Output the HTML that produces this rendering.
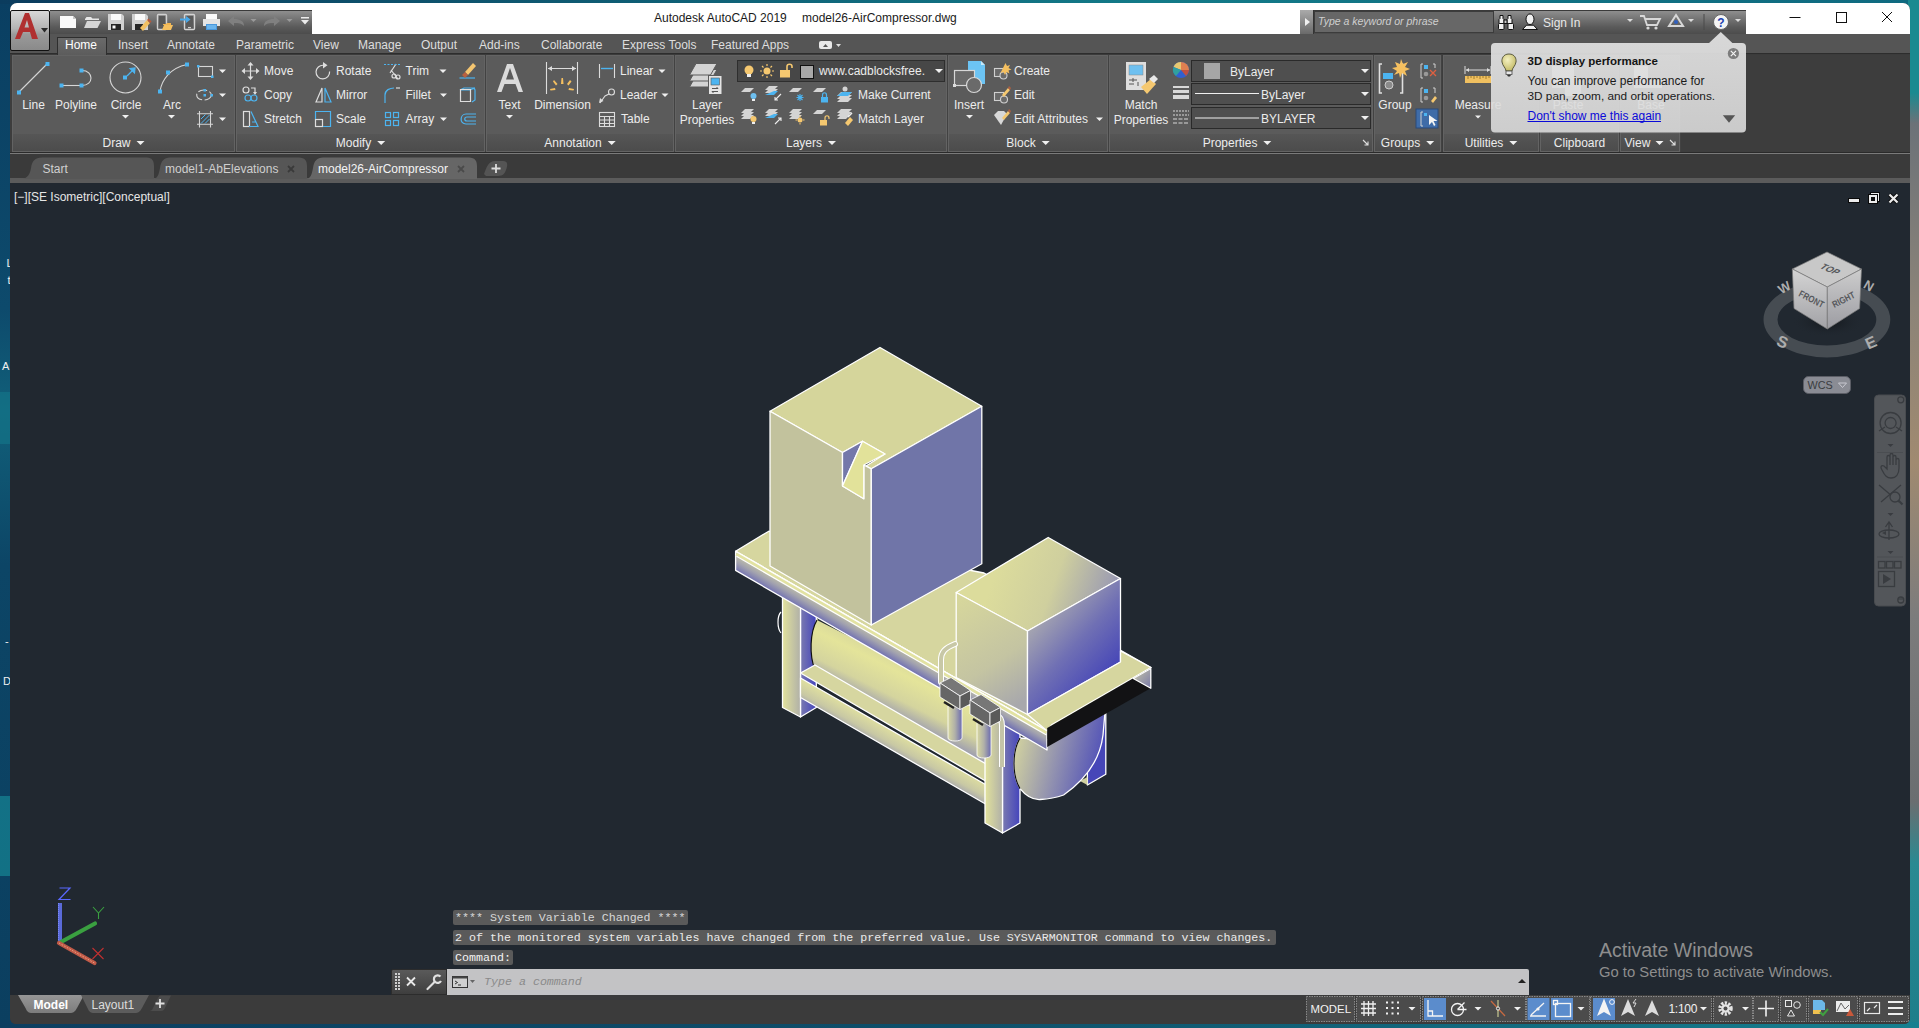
<!DOCTYPE html>
<html><head><meta charset="utf-8">
<style>
*{margin:0;padding:0;box-sizing:border-box}
html,body{width:1919px;height:1028px;overflow:hidden}
body{position:relative;font-family:"Liberation Sans",sans-serif;font-size:12px;
background:linear-gradient(180deg,#0a3f62 0,#0d4a6c 30%,#11607a 40%,#0c4566 55%,#0b3f60 100%);}
.a{position:absolute}
.t{position:absolute;white-space:nowrap;color:#f0f0f0;font-size:12px;line-height:14px}
.m{position:absolute;white-space:nowrap;font-family:"Liberation Mono",monospace;font-size:11.65px;line-height:15px}
#deskR{left:1908px;top:0;width:11px;height:1028px;background:linear-gradient(180deg,#1a8a90 0,#1a8a90 9%,#6c7278 12%,#8c8478 30%,#a08a70 45%,#7c7c7c 60%,#6a6e70 78%,#2a8a92 84%,#1d7e8a 100%)}
#deskT{left:0;top:0;width:1919px;height:4px;background:linear-gradient(90deg,#0b3c5e 0,#0e5a72 30%,#127a88 60%,#0f6a80 100%)}
#deskB{left:0;top:1022px;width:1919px;height:6px;background:linear-gradient(90deg,#0c3e60 0,#0e4f6a 50%,#168090 100%)}
#win{left:10px;top:3px;width:1900px;height:1021px;border-radius:7px 7px 6px 6px;overflow:hidden;background:#3b3b3b}
#title{left:0;top:0;width:1900px;height:31px;background:#fff}
#tabbar{left:0;top:31px;width:1900px;height:20px;background:#555555;border-bottom:1px solid #2d2d2d}
#ribbon{left:0;top:52px;width:1900px;height:97px;background:#3d3d3d}
#doctabs{left:0;top:149px;width:1900px;height:31px;background:#3a3a3a}
#vp{left:0;top:180px;width:1900px;height:812px;background:#212830}
#status{left:0;top:992px;width:1900px;height:29px;background:#3b3b3b}
</style></head><body>
<div id="deskT" class="a"></div>
<div id="deskR" class="a"></div>
<div id="deskB" class="a"></div>
<svg class="a" style="left:0;top:0" width="12" height="1028" viewBox="0 0 12 1028">
 <rect x="0" y="392" width="12" height="52" fill="#147a8c" opacity=".55"/>
 <rect x="0" y="796" width="12" height="80" fill="#168292" opacity=".75"/>
 <g font-family="Liberation Sans" font-size="11" fill="#f0f0f0">
  <text x="6.5" y="266.5">L</text><text x="7.5" y="284">t</text><text x="2" y="370">A</text><text x="5" y="645">-</text><text x="3" y="685">D</text>
 </g>
</svg>
<div id="win" class="a">
  <div id="title" class="a"></div>
  <div id="tabbar" class="a"></div>
  <div id="ribbon" class="a"></div>
  <div id="doctabs" class="a"></div>
  <div id="vp" class="a"></div>
  <div id="status" class="a"></div>
</div>
<!-- ===== TITLE BAR ===== -->
<div class="a" style="left:10px;top:10px;width:40px;height:41px;border:1px solid #111;border-radius:2px;background:linear-gradient(180deg,#d8d8d8 0,#b4b4b4 45%,#9a9a9a 60%,#8a8a8a 100%)"></div>
<svg class="a" style="left:10px;top:10px" width="40" height="41" viewBox="0 0 40 41">
 <path d="M5 29 L15 3 L19 3 L28 29 L22 29 L20 22 L13 22 L10 29 Z M14.5 17.5 L19 17.5 L17 10 Z" fill="#b03030"/>
 <path d="M31 18 L38 18 L34.5 22.5 Z" fill="#2a2a2a"/>
</svg>
<div class="a" style="left:50px;top:10px;width:262px;height:24px;border-top:1px solid #3a3a3a;background:linear-gradient(180deg,#8e8e8e 0,#6c6c6c 45%,#5a5a5a 70%,#4c4c4c 100%)"></div>
<svg class="a" style="left:50px;top:10px" width="262" height="24" viewBox="50 10 262 24">
 <path d="M60 16 H73 L76 19 V28 H60 Z" fill="#fafafa"/><path d="M73 16 V19 H76 Z" fill="#c8c8c8"/>
 <path d="M85 19 L86.5 17 H91 L92.5 18.5 H99 V20 H85 Z" fill="#e8e8e8"/><path d="M84 28 L87 21 H101 L97.5 28 Z" fill="#d6d6d6"/>
 <path d="M108 14 H122 L124 16 V30 H108 Z" fill="#d0d0d0"/><rect x="111" y="14" width="10" height="6" fill="#fafafa"/><rect x="111" y="24" width="10" height="6" fill="#252525"/><rect x="112.5" y="25.5" width="3" height="3" fill="#fafafa"/>
 <path d="M132 14 H146 L148 16 V30 H132 Z" fill="#d0d0d0"/><rect x="135" y="14" width="10" height="6" fill="#fafafa"/><rect x="135" y="24" width="8" height="6" fill="#252525"/>
 <path d="M140 28 L147 20 L150 23 L143 31 Z" fill="#f2c062"/><path d="M147 20 L148.5 18.5 L151.5 21.5 L150 23 Z" fill="#b8583a"/>
 <rect x="157.5" y="14.5" width="9" height="15" rx="1" fill="none" stroke="#d0d0d0" stroke-width="1.4"/><rect x="159" y="16" width="6" height="10" fill="#575757"/>
 <path d="M163 24 H166 L167 23 H171 V25 H163 Z" fill="#f0b450"/><path d="M162 30 L164 25 H173 L171 30 Z" fill="#f5c060"/>
 <rect x="184.5" y="14.5" width="10" height="15" rx="1" fill="none" stroke="#d4d4d4" stroke-width="1.4"/><rect x="186" y="16" width="7" height="10" fill="#5a5a5a"/><rect x="188" y="27" width="3" height="1.2" fill="#ccc"/>
 <path d="M180 18.5 H186 V16 L190.5 19.5 L186 23 V20.5 H180 Z" fill="#4aa8e8"/>
 <rect x="206" y="14" width="11" height="5" fill="#fafafa"/><path d="M203 19 H220 V26 H217 V24 H206 V26 H203 Z" fill="#e4e4e4"/><rect x="206" y="24" width="11" height="6" fill="#4a98dc"/><rect x="207" y="25" width="9" height="4" fill="#6ab4ec"/>
 <path d="M228 21 L234 16 V19 C240 19 244 21 244 26 C242 23.5 239 23 234 23 V26 Z" fill="#808080"/>
 <path d="M250.5 19 H256.5 L253.5 22 Z" fill="#9a9a9a"/>
 <path d="M280 21 L274 16 V19 C268 19 264 21 264 26 C266 23.5 269 23 274 23 V26 Z" fill="#808080"/>
 <path d="M286.5 19 H292.5 L289.5 22 Z" fill="#9a9a9a"/>
 <path d="M301 17 H309 V18.5 H301 Z M301 20 H309 L305 24.5 Z" fill="#ececec"/>
</svg>
<div class="t" style="left:654px;top:11px;color:#1a1a1a;font-size:12px">Autodesk AutoCAD 2019</div>
<div class="t" style="left:802px;top:11px;color:#1a1a1a;font-size:12px">model26-AirCompressor.dwg</div>
<!-- search -->
<div class="a" style="left:1300px;top:10px;width:446px;height:24px;border-top:1px solid #3a3a3a;background:linear-gradient(180deg,#8e8e8e 0,#6c6c6c 45%,#5a5a5a 70%,#4c4c4c 100%)"></div>
<div class="a" style="left:1300px;top:10px;width:14px;height:24px;border-right:1px solid #333;background:linear-gradient(180deg,#aaa,#6a6a6a)"></div>
<svg class="a" style="left:1302px;top:16px" width="10" height="12"><path d="M3 2 L8 6 L3 10 Z" fill="#f0f0f0"/></svg>
<div class="a" style="left:1314px;top:11px;width:180px;height:22px;background:#676767;border:1px solid #3c3c3c"></div>
<div class="t" style="left:1318px;top:14px;color:#cfcfcf;font-style:italic;font-size:10.5px">Type a keyword or phrase</div>
<svg class="a" style="left:1494px;top:10px" width="252" height="24" viewBox="0 0 252 24">
 <g stroke="#111" stroke-width="1" fill="#f0f0f0">
  <path d="M6 5.5 h3 v3 l1 1 v4 h-5 v-4 l1 -1z"/><path d="M14 5.5 h3 v3 l1 1 v4 h-5 v-4 l1 -1z"/>
  <rect x="4.5" y="13.5" width="5.5" height="6" rx="1"/><rect x="14" y="13.5" width="5.5" height="6" rx="1"/>
  <rect x="10" y="10" width="3" height="3.5" fill="#ccc"/>
  <ellipse cx="36" cy="9.2" rx="4" ry="5.3"/><path d="M28.5 19.5 L32.5 15.2 H39.5 L43.5 19.5 Z"/>
 </g>
 <text x="49" y="17" font-family="Liberation Sans" font-size="12" fill="#e8e8e8">Sign In</text>
 <path d="M133 9 H139 L136 12 Z" fill="#ddd"/>
 <path d="M146 6 H150 L153 15 H163 L166 9 H151" fill="none" stroke="#d8d8d8" stroke-width="1.8"/><circle cx="154" cy="18" r="1.6" fill="#d8d8d8"/><circle cx="162" cy="18" r="1.6" fill="#d8d8d8"/>
 <path d="M182 5 L189 16 H175 Z" fill="none" stroke="#d8d8d8" stroke-width="2"/><circle cx="182" cy="12" r="2" fill="#3060c0"/>
 <path d="M194 9 H200 L197 12 Z" fill="#ddd"/>
 <path d="M210 4 V20" stroke="#4a4a4a"/>
 <circle cx="227" cy="12" r="7.5" fill="#f4f4f4" stroke="#666" stroke-width="1"/><text x="227" y="16.5" text-anchor="middle" font-family="Liberation Sans" font-weight="bold" font-size="12" fill="#2040b0">?</text>
 <path d="M241 9 H247 L244 12 Z" fill="#ddd"/>
</svg>
<!-- window controls -->
<svg class="a" style="left:1780px;top:8px" width="125" height="20" viewBox="0 0 125 20">
 <path d="M9.5 9.5 H20.5" stroke="#111" stroke-width="1"/>
 <rect x="56.5" y="4.5" width="10" height="10" fill="none" stroke="#111" stroke-width="1"/>
 <path d="M102 4 L112 14 M112 4 L102 14" stroke="#111" stroke-width="1"/>
</svg>
<!-- ===== TAB BAR ===== -->
<div class="a" style="left:57px;top:37px;width:50px;height:18px;border:1px solid #2e2e2e;border-bottom:none;background:linear-gradient(180deg,#6a6a6a,#5c5c5c)"></div>
<div class="t" style="left:65px;top:38px;color:#fff">Home</div>
<div class="t" style="left:118px;top:38px;color:#dedede">Insert</div>
<div class="t" style="left:167px;top:38px;color:#dedede">Annotate</div>
<div class="t" style="left:236px;top:38px;color:#dedede">Parametric</div>
<div class="t" style="left:313px;top:38px;color:#dedede">View</div>
<div class="t" style="left:358px;top:38px;color:#dedede">Manage</div>
<div class="t" style="left:421px;top:38px;color:#dedede">Output</div>
<div class="t" style="left:479px;top:38px;color:#dedede">Add-ins</div>
<div class="t" style="left:541px;top:38px;color:#dedede">Collaborate</div>
<div class="t" style="left:622px;top:38px;color:#dedede">Express Tools</div>
<div class="t" style="left:711px;top:38px;color:#dedede">Featured Apps</div>
<svg class="a" style="left:818px;top:39px" width="26" height="12"><rect x="1" y="2" width="13" height="8" rx="2" fill="#e8e8e8"/><path d="M5 8 L7.5 5 L10 8Z" fill="#555"/><path d="M18 5 H23 L20.5 8Z" fill="#ddd"/></svg>


<div class="a" style="left:10px;top:152px;width:1900px;height:1px;background:#2a2a2a"></div>
<div class="a" style="left:10px;top:153px;width:1900px;height:1px;background:#7a7a7a"></div>
<svg class="a" style="left:0;top:0" width="1919" height="160" viewBox="0 0 1919 160">
<defs><linearGradient id="lbl" x1="0" y1="0" x2="0" y2="1"><stop offset="0" stop-color="#565656"/><stop offset="1" stop-color="#4b4b4b"/></linearGradient></defs>
<rect x="12" y="55" width="223" height="79" fill="#5b5b5b"/>
<rect x="12" y="134" width="223" height="18" fill="url(#lbl)"/>
<rect x="12.5" y="55.5" width="222" height="96" fill="none" stroke="#636363" stroke-width="1"/>
<rect x="235" y="55" width="1" height="97" fill="#424242"/>
<text x="102.5" y="147" font-family="Liberation Sans" font-size="12" fill="#ececec">Draw</text>
<path d="M136.5 141 h8 l-4 4 z" fill="#f0f0f0"/>
<rect x="236" y="55" width="249" height="79" fill="#5b5b5b"/>
<rect x="236" y="134" width="249" height="18" fill="url(#lbl)"/>
<rect x="236.5" y="55.5" width="248" height="96" fill="none" stroke="#636363" stroke-width="1"/>
<rect x="485" y="55" width="1" height="97" fill="#424242"/>
<text x="335.8" y="147" font-family="Liberation Sans" font-size="12" fill="#ececec">Modify</text>
<path d="M377.2 141 h8 l-4 4 z" fill="#f0f0f0"/>
<rect x="486" y="55" width="188" height="79" fill="#5b5b5b"/>
<rect x="486" y="134" width="188" height="18" fill="url(#lbl)"/>
<rect x="486.5" y="55.5" width="187" height="96" fill="none" stroke="#636363" stroke-width="1"/>
<rect x="674" y="55" width="1" height="97" fill="#424242"/>
<text x="544.3" y="147" font-family="Liberation Sans" font-size="12" fill="#ececec">Annotation</text>
<path d="M607.7 141 h8 l-4 4 z" fill="#f0f0f0"/>
<rect x="675" y="55" width="272" height="79" fill="#5b5b5b"/>
<rect x="675" y="134" width="272" height="18" fill="url(#lbl)"/>
<rect x="675.5" y="55.5" width="271" height="96" fill="none" stroke="#636363" stroke-width="1"/>
<rect x="947" y="55" width="1" height="97" fill="#424242"/>
<text x="786.0" y="147" font-family="Liberation Sans" font-size="12" fill="#ececec">Layers</text>
<path d="M828.0 141 h8 l-4 4 z" fill="#f0f0f0"/>
<rect x="948" y="55" width="160" height="79" fill="#5b5b5b"/>
<rect x="948" y="134" width="160" height="18" fill="url(#lbl)"/>
<rect x="948.5" y="55.5" width="159" height="96" fill="none" stroke="#636363" stroke-width="1"/>
<rect x="1108" y="55" width="1" height="97" fill="#424242"/>
<text x="1006.3" y="147" font-family="Liberation Sans" font-size="12" fill="#ececec">Block</text>
<path d="M1041.7 141 h8 l-4 4 z" fill="#f0f0f0"/>
<rect x="1109" y="55" width="264" height="79" fill="#5b5b5b"/>
<rect x="1109" y="134" width="264" height="18" fill="url(#lbl)"/>
<rect x="1109.5" y="55.5" width="263" height="96" fill="none" stroke="#636363" stroke-width="1"/>
<rect x="1373" y="55" width="1" height="97" fill="#424242"/>
<text x="1202.7" y="147" font-family="Liberation Sans" font-size="12" fill="#ececec">Properties</text>
<path d="M1263.3 141 h8 l-4 4 z" fill="#f0f0f0"/>
<path d="M1363 140 l5 5 M1368 141.5 v3.5 h-3.5" stroke="#e0e0e0" stroke-width="1.1" fill="none"/>
<rect x="1374" y="55" width="67" height="79" fill="#5b5b5b"/>
<rect x="1374" y="134" width="67" height="18" fill="url(#lbl)"/>
<rect x="1374.5" y="55.5" width="66" height="96" fill="none" stroke="#636363" stroke-width="1"/>
<rect x="1441" y="55" width="1" height="97" fill="#424242"/>
<text x="1380.8" y="147" font-family="Liberation Sans" font-size="12" fill="#ececec">Groups</text>
<path d="M1426.2 141 h8 l-4 4 z" fill="#f0f0f0"/>
<rect x="1443" y="55" width="96" height="79" fill="#5b5b5b"/>
<rect x="1443" y="134" width="96" height="18" fill="url(#lbl)"/>
<rect x="1443.5" y="55.5" width="95" height="96" fill="none" stroke="#636363" stroke-width="1"/>
<rect x="1539" y="55" width="1" height="97" fill="#424242"/>
<text x="1464.7" y="147" font-family="Liberation Sans" font-size="12" fill="#ececec">Utilities</text>
<path d="M1509.3 141 h8 l-4 4 z" fill="#f0f0f0"/>
<rect x="1540" y="55" width="79" height="79" fill="#5b5b5b"/>
<rect x="1540" y="134" width="79" height="18" fill="url(#lbl)"/>
<rect x="1540.5" y="55.5" width="78" height="96" fill="none" stroke="#636363" stroke-width="1"/>
<rect x="1619" y="55" width="1" height="97" fill="#424242"/>
<text x="1553.8" y="147" font-family="Liberation Sans" font-size="12" fill="#ececec">Clipboard</text>
<rect x="1620" y="55" width="60" height="79" fill="#5b5b5b"/>
<rect x="1620" y="134" width="60" height="18" fill="url(#lbl)"/>
<rect x="1620.5" y="55.5" width="59" height="96" fill="none" stroke="#636363" stroke-width="1"/>
<rect x="1680" y="55" width="1" height="97" fill="#424242"/>
<text x="1624.5" y="147" font-family="Liberation Sans" font-size="12" fill="#ececec">View</text>
<path d="M1655.5 141 h8 l-4 4 z" fill="#f0f0f0"/>
<path d="M1670 140 l5 5 M1675 141.5 v3.5 h-3.5" stroke="#e0e0e0" stroke-width="1.1" fill="none"/>
<rect x="1681" y="55" width="229" height="97" fill="#3d3d3d"/>
<g font-family="Liberation Sans" font-size="12" fill="#ececec">
<!-- DRAW -->
<g stroke="#d6d6d6" stroke-width="1.1" fill="none">
 <path d="M19 92 L47 64"/>
 <path d="M62 85.5 H81"/><path d="M82 70.5 C94 70.5 94 85.5 82 85.5"/>
 <circle cx="125.5" cy="77.5" r="15.5"/>
 <path d="M160 91 C162 80 170 68 187 64.5"/>
 <rect x="198.5" y="66.5" width="14" height="10"/>
 <ellipse cx="204" cy="95" rx="7.3" ry="5" stroke-dasharray="9 2.5"/>
 <rect x="200" y="114" width="10.5" height="10.3" fill="#4c4c4c" stroke="none"/><path d="M197 113.8h16M197 124.2h16M199.5 111v16.5M210.5 111v16.5"/>
</g>
<g fill="#4cb4f0">
 <rect x="17" y="90.5" width="4" height="4"/><rect x="45.5" y="62" width="4" height="4"/>
 <rect x="59.5" y="83.5" width="4" height="4"/><rect x="79.5" y="83.5" width="4" height="4"/><rect x="79.5" y="68.5" width="4" height="4"/>
 <rect x="123" y="75.5" width="4" height="4"/><path d="M127 76 L133 70 M130 68.5 L135 68 L134.5 73 Z" stroke="#4cb4f0" stroke-width="1.2"/>
 <rect x="158" y="89.5" width="4" height="4"/><rect x="166" y="70.5" width="4" height="4"/><rect x="185" y="62.5" width="4" height="4"/>
 <rect x="197" y="65" width="2.5" height="2.5"/><rect x="211" y="75.5" width="2.5" height="2.5"/>
 <rect x="203.5" y="89" width="2.5" height="2.5"/><rect x="203.5" y="94" width="2.5" height="2.5"/><rect x="210.5" y="94" width="2.5" height="2.5"/>
 <path d="M201 123.5 L209.5 115 M201 119 L205.5 114.5 M205 123.5 L209.5 119" stroke="#4cb4f0" stroke-width="1"/>
</g>
<text x="33.5" y="109" text-anchor="middle">Line</text>
<text x="76" y="109" text-anchor="middle">Polyline</text>
<text x="126" y="109" text-anchor="middle">Circle</text>
<text x="172" y="109" text-anchor="middle">Arc</text>
<g fill="#f0f0f0">
 <path d="M122 115 h7 l-3.5 3.5z"/><path d="M168 115 h7 l-3.5 3.5z"/>
 <path d="M219 69.5 h7 l-3.5 3.5z"/><path d="M219 93.5 h7 l-3.5 3.5z"/><path d="M219 117.5 h7 l-3.5 3.5z"/>
</g>
<!-- MODIFY -->
<text x="264" y="75">Move</text><text x="264" y="99">Copy</text><text x="264" y="123">Stretch</text>
<text x="336" y="75">Rotate</text><text x="336" y="99">Mirror</text><text x="336" y="123">Scale</text>
<text x="405.5" y="75">Trim</text><text x="405.5" y="99">Fillet</text><text x="405.5" y="123">Array</text>
<g fill="#f0f0f0"><path d="M439.5 69.5 h7 l-3.5 3.5z"/><path d="M440 93.5 h7 l-3.5 3.5z"/><path d="M440 117.5 h7 l-3.5 3.5z"/></g>
<g stroke="#dedede" stroke-width="1.2" fill="none">
 <path d="M250.5 63.5 V78.5 M243 71 H258"/>
 <path d="M329.6 71.5 A 6.8 6.8 0 1 1 323.5 65.3"/>
 <path d="M391 70 L398 79 M396 64 L390 73"/><circle cx="394" cy="76" r="2"/><circle cx="398" cy="77" r="2"/>
 <circle cx="246" cy="90" r="3"/><path d="M251 88 H255 V92"/>
 <path d="M316 102 L322 88 V102 Z"/>
 <rect x="243.5" y="111.5" width="6" height="15"/>
 <rect x="315.5" y="119.5" width="7" height="7"/>
</g>
<g fill="#dedede">
 <path d="M250.5 62 L247.5 65.5 H253.5 Z M250.5 80 L247.5 76.5 H253.5 Z M241.5 71 L245 68 V74 Z M259.5 71 L256 68 V74 Z"/>
 <path d="M323 62 L327.5 65.3 L323 68.6 Z"/>
 <path d="M253 92 L257 92 L255 95 Z"/>
</g>
<g stroke="#4cb4f0" stroke-width="1.2" fill="none">
 <path d="M384 64.5 H400" stroke-dasharray="2 1.5"/>
 <circle cx="248" cy="98" r="3"/><circle cx="254" cy="98" r="3"/>
 <path d="M325 88 V102 H331 Z"/>
 <path d="M385 103 V95 C385 90 390 88 394 88"/><path d="M396 88 H400" stroke="#dedede"/>
 <path d="M251 111.5 L258 126.5 H249 M252 122 L256 122"/>
 <path d="M315.5 119 V111.5 H330.5 V126.5 H323"/>
 <rect x="385.5" y="112.5" width="5" height="5"/><rect x="393.5" y="112.5" width="5" height="5"/><rect x="385.5" y="120.5" width="5" height="5"/><rect x="393.5" y="120.5" width="5" height="5"/>
 <path d="M459.5 78 H475"/>
 <path d="M460 90 L464 88 H474 L475 90 V100 L472 102 M460 90 H470 L475 88"/>
 <path d="M476 114 H466 C460 114 459 124 466 124 H476 M476 117 H467 C464 117 464 121 467 121 H476"/>
</g>
<g>
 <path d="M465 72 L473 63 L476 66 L468 75 Z" fill="#f4c570"/><path d="M462 75 L465 72 L468 75 L465 78 Z" fill="#b86040"/>
 <path d="M460.5 89.5 h10 v12 h-10z" fill="none" stroke="#dedede" stroke-width="1.2"/>
</g>
<!-- ANNOTATION -->
<path d="M497 92 L507 64 H513 L523 92 H518.5 L515.5 84 H504.5 L501.5 92 Z M506 79.5 H514 L510 68 Z" fill="#dadada"/>
<text x="509.5" y="109" text-anchor="middle">Text</text><path d="M506 115 h7 l-3.5 3.5z" fill="#f0f0f0"/>
<g stroke="#dcdcdc" stroke-width="1.1" fill="none"><path d="M546.5 62 V94 M577.5 62 V94 M548 68.5 H576"/></g>
<g fill="#dcdcdc"><path d="M548 68.5 L552 66 V71 Z M576 68.5 L572 66 V71 Z"/></g>
<g fill="#f5c060"><path d="M561.5 78 L563 78 L563.5 84 L561 84Z"/><path d="M554 80 L557.5 84 L556 85.5 L553 81.5Z"/><path d="M570 80 L567 84 L568.5 85.5 L571.5 81.5Z"/><path d="M550 89 L555 88 L555.5 90 L550.5 90.5Z"/><path d="M574 89 L569 88 L568.5 90 L573.5 90.5Z"/></g>
<text x="562.5" y="109" text-anchor="middle">Dimension</text>
<g stroke="#dcdcdc" stroke-width="1.1" fill="none"><path d="M599.5 64 V78 M614.5 64 V78"/><circle cx="611.5" cy="92" r="3"/><path d="M609 94 L605 96 L600 103"/><rect x="599.5" y="112.5" width="15" height="14"/><path d="M599.5 116.5 H614.5 M599.5 120 H614.5 M599.5 123.5 H614.5 M604.5 116.5 V126.5 M609.5 116.5 V126.5"/></g>
<path d="M601 68.5 H613" stroke="#4cb4f0" stroke-width="1.4"/>
<path d="M599 103 L600 98 L603.5 101 Z" fill="#dcdcdc"/>
<text x="620" y="75">Linear</text><text x="620" y="99">Leader</text><text x="621" y="123">Table</text>
<g fill="#f0f0f0"><path d="M658.5 69.5 h7 l-3.5 3.5z"/><path d="M661.5 93.5 h7 l-3.5 3.5z"/></g>
<!-- LAYERS -->
<g fill="#d4d4d4" stroke="#5b5b5b" stroke-width="1"><path d="M689.5 87 L696 75.5 H717 L710.5 87 Z"/><path d="M689.5 81 L696 69.5 H717 L710.5 81 Z"/><path d="M689.5 75 L696 63.5 H717 L710.5 75 Z"/></g>
<rect x="708.5" y="75.5" width="13.5" height="19" fill="#e4e4e4" stroke="#5b5b5b"/><rect x="711" y="78" width="8.5" height="7" fill="#4cb4f0" stroke="#555" stroke-width=".6"/><path d="M712 88.5 h6 l-1.5 -1.5 M718 91.5 h-6 l1.5 1.5" stroke="#555" stroke-width="1" fill="none"/>
<text x="707" y="109" text-anchor="middle">Layer</text><text x="707" y="124" text-anchor="middle">Properties</text>
<rect x="737.5" y="60.5" width="207" height="21" fill="#474747" stroke="#2e2e2e"/>
<circle cx="749" cy="70" r="4.5" fill="#f5c870"/><rect x="747" y="74" width="4" height="3" fill="#eee"/>
<circle cx="767" cy="71" r="3.5" fill="#f5c870"/><g stroke="#f5c870" stroke-width="1.2"><path d="M767 64 v2 M767 76 v2 M760 71 h2 M772 71 h2 M762 66 l1.5 1.5 M770.5 74.5 l1.5 1.5 M762 76 l1.5 -1.5 M770.5 67.5 l1.5 -1.5"/></g>
<rect x="780" y="70" width="10" height="7.5" fill="#f5c870"/><path d="M787 70 V66.5 C787 63.5 792 63.5 792 66.5 V68" stroke="#f5c870" stroke-width="1.6" fill="none"/>
<rect x="800.5" y="65.5" width="13" height="13" fill="#a8a8a8" stroke="#111"/>
<text x="819" y="75">www.cadblocksfree.</text><path d="M935 69 h8 l-4 4z" fill="#f0f0f0"/>
<g fill="#d4d4d4">
 <path d="M741 92 L745 88 H754 L750 92Z"/><path d="M765 90 L769 86 H778 L774 90Z"/><path d="M765 93 L769 89 H778 L774 93Z"/><path d="M789 92 L793 88 H802 L798 92Z"/><path d="M813 92 L817 88 H826 L822 92Z"/>
 <path d="M837 96 L841 92 H852 L848 96Z"/><path d="M837 99 L841 95 H852 L848 99Z"/><path d="M837 102 L841 98 H852 L848 102Z"/>
 <path d="M741 113 L745 109 H754 L750 113Z"/><path d="M741 116 L745 112 H754 L750 116Z"/><path d="M741 119 L745 115 H754 L750 119Z"/>
 <path d="M765 113 L769 109 H778 L774 113Z"/><path d="M765 116 L769 112 H778 L774 116Z"/>
 <path d="M789 113 L793 109 H802 L798 113Z"/><path d="M789 116 L793 112 H802 L798 116Z"/><path d="M789 119 L793 115 H802 L798 119Z"/>
 <path d="M813 114 L817 110 H826 L822 114Z"/>
 <path d="M837 113 L841 109 H852 L848 113Z"/><path d="M837 116 L841 112 H852 L848 116Z"/><path d="M837 119 L841 115 H850 L846 119Z"/>
</g>
<circle cx="753.5" cy="96" r="3" fill="#6ec0f0"/><rect x="752" y="99" width="3" height="2" fill="#eee"/>
<path d="M765 95 L774 91 H778 L774 95Z" fill="#4cb4f0"/><path d="M781 94 L775 100 M775 97 V100 H778" stroke="#eee" stroke-width="1.1" fill="none"/>
<g stroke="#4cb4f0" stroke-width="1.1"><path d="M800 94 v7 M796.5 97.5 h7 M797.5 95 l5 5 M802.5 95 l-5 5"/></g>
<rect x="821" y="97" width="7" height="5.5" fill="#4cb4f0"/><path d="M822.5 97 v-2 c0-3 4-3 4 0 v2" stroke="#4cb4f0" fill="none" stroke-width="1.2"/>
<path d="M837 96 L842 92 H852 L848 96Z" fill="#4cb4f0"/><circle cx="845" cy="89" r="2.5" fill="#d4d4d4"/>
<circle cx="753.5" cy="119" r="3" fill="#f5c870"/><rect x="752" y="122" width="3" height="2" fill="#eee"/>
<path d="M765 118 L774 114 H778 L774 118Z" fill="#4cb4f0"/><path d="M775 124 L781 118 M778 118 H781 V121" stroke="#eee" stroke-width="1.1" fill="none"/>
<circle cx="800" cy="120" r="2.5" fill="#f5c870"/><g stroke="#f5c870" stroke-width="1"><path d="M800 115.5 v1.5 M800 123 v1.5 M795.5 120 h1.5 M803 120 h1.5"/></g>
<rect x="820" y="120" width="7" height="5.5" fill="#f5c870"/><path d="M825 120 v-2 c0-3 4-3 4 0 v1" stroke="#f5c870" fill="none" stroke-width="1.2"/>
<path d="M845 123 L850 117 L853 120 L848 126Z" fill="#f5c870"/><path d="M848 117 L852 113" stroke="#eee" stroke-width="1.5"/>
<text x="858" y="99">Make Current</text><text x="858" y="123">Match Layer</text>
<!-- BLOCK -->
<path d="M968 61 H981 L985 65 V84 H968Z" fill="#6cc4f4"/><path d="M981 61 V65 H985Z" fill="#c8e8f8"/>
<rect x="954.5" y="70.5" width="20" height="15" fill="#6a6a6a" stroke="#d8d8d8" stroke-width="1.2"/><circle cx="974" cy="85" r="7.5" fill="#6a6a6a" stroke="#d8d8d8" stroke-width="1.2"/><rect x="953" y="84" width="3" height="3" fill="#ddd"/>
<text x="969" y="109" text-anchor="middle">Insert</text><path d="M966 115 h7 l-3.5 3.5z" fill="#f0f0f0"/>
<g stroke="#d0d0d0" stroke-width="1.1" fill="#6a6a6a"><rect x="994.5" y="68.5" width="9" height="8"/><circle cx="1003.5" cy="75.5" r="3.5"/><rect x="994.5" y="92.5" width="9" height="8"/><circle cx="1004" cy="99.5" r="3.5"/></g>
<path d="M1004 66 l1.5 -3 l1.5 3 l3 -1 l-1.5 3 l3 1.5 l-3 1 l1 3 l-3-1.5 l-1.5 3 l-1.5-3 l-3 1 l1.5-3 z" fill="#f5c060"/>
<path d="M1002 95 L1008 88 L1010 90 L1004 97Z" fill="#f5c870"/><path d="M1008 88 L1009 86 L1011 88 L1010 90Z" fill="#b06040"/>
<path d="M994 115 L998 111 H1004 L1007 114 L1001 125 Z" fill="#d8d8d8"/><path d="M1002 118 L1008 111 L1010 113 L1004 120Z" fill="#f5c870"/><path d="M1008 111 L1009 109 L1011 111 L1010 113Z" fill="#b06040"/>
<text x="1014" y="75">Create</text><text x="1014" y="99">Edit</text><text x="1014" y="123">Edit Attributes</text>
<path d="M1096 117.5 h7 l-3.5 3.5z" fill="#f0f0f0"/>
<!-- PROPERTIES -->
<rect x="1126" y="62" width="20" height="28" fill="#dedede"/><rect x="1129" y="65" width="14" height="10" fill="#6ec0f0" stroke="#888" stroke-width=".5"/>
<path d="M1129 80 h8 M1129 84 h5 M1133 78 v4 M1138 82 v4" stroke="#555" stroke-width="1"/>
<path d="M1141 87 L1151 79 L1156 84 L1147 94 Z" fill="#f5c870"/><path d="M1149 79 L1154 75 L1158 79 L1154 83Z" fill="#e8e8e8"/>
<text x="1141" y="109" text-anchor="middle">Match</text><text x="1141" y="124" text-anchor="middle">Properties</text>
<circle cx="1181" cy="70" r="8" fill="#3060d0"/><path d="M1181 70 L1181 62 A8 8 0 0 1 1189 70 Z" fill="#e08050"/><path d="M1181 70 L1173.5 67 A8 8 0 0 1 1181 62Z" fill="#e8c870"/><path d="M1181 70 L1173.5 67 A8 8 0 0 0 1176 76Z" fill="#30a0a0"/><path d="M1181 70 L1189 70 A8 8 0 0 1 1186 76Z" fill="#c05040"/>
<g fill="#d8d8d8"><rect x="1173" y="86" width="16" height="2"/><rect x="1173" y="90" width="16" height="3"/><rect x="1173" y="95" width="16" height="4"/></g>
<g stroke="#d8d8d8" stroke-width="1.2" stroke-dasharray="1.5 1"><path d="M1173 111 h16 M1173 115 h16" stroke-dasharray="2 1"/><path d="M1173 119 h16 M1173 123 h16" stroke-dasharray="4 1.5"/></g>
<g stroke="#2a2a2a" fill="#4f4f4f"><rect x="1191.5" y="60.5" width="179" height="21"/><rect x="1191.5" y="83.5" width="179" height="21"/><rect x="1191.5" y="107.5" width="179" height="21"/></g>
<rect x="1204" y="63" width="16" height="16" fill="#a6a6a6"/>
<text x="1230" y="76">ByLayer</text>
<path d="M1195 93.5 H1259 M1195 118 H1259" stroke="#f0f0f0" stroke-width="1.1"/>
<text x="1261" y="99">ByLayer</text><text x="1261" y="123">BYLAYER</text>
<g fill="#f0f0f0"><path d="M1361 69 h8 l-4 4z"/><path d="M1361 92 h8 l-4 4z"/><path d="M1361 116 h8 l-4 4z"/></g>
<!-- GROUPS -->
<path d="M1382 64 H1379.5 V93 H1382 M1400 64 H1402.5 V93 H1400" stroke="#e0e0e0" stroke-width="1.6" fill="none"/>
<rect x="1383" y="73" width="10" height="6" fill="#4cb4f0"/><circle cx="1389" cy="85" r="4" fill="#8a8a8a" stroke="#ccc"/>
<path d="M1401 59 l2 5 l5-2 l-3 5 l5 2 l-5 2 l2 5 l-5-3 l-2 5 l-1-5 l-5 2 l3-4 l-5-3 l5-1 l-2-5 l5 2z" fill="#f5c060"/>
<text x="1395" y="109" text-anchor="middle">Group</text>
<g stroke="#d0d0d0" stroke-width="1" fill="none"><path d="M1423 64 h-2 v14 h2 M1433 64 h2 v4"/><path d="M1423 88 h-2 v14 h2 M1433 88 h2 v5"/></g>
<rect x="1424" y="65" width="4" height="4" fill="#4cb4f0"/><circle cx="1426" cy="74" r="2.3" fill="#999"/><path d="M1430 70 l6 6 m0-6 l-6 6" stroke="#e06040" stroke-width="1.3"/>
<rect x="1424" y="89" width="4" height="4" fill="#4cb4f0"/><circle cx="1426" cy="98" r="2.3" fill="#999"/><path d="M1431 101 l4-5 l2 2 l-4 5z" fill="#f5c870"/>
<rect x="1416" y="109" width="22" height="19" fill="#3f6ca8" stroke="#2a4a7a"/><path d="M1423 112 h-2 v14 h2" stroke="#d0d0d0" fill="none"/><rect x="1424" y="113" width="3" height="3" fill="#4cb4f0"/><path d="M1429 115 v10 l3-3 l2 4 l1.5-1 l-2-4 h4 z" fill="#f4f4f4"/>
<!-- UTILITIES -->
<path d="M1465 66 V74 M1491 66 V74 M1466 70 H1490" stroke="#dcdcdc" stroke-width="1"/><path d="M1466 70 l3-2 v4z M1490 70 l-3-2 v4z" fill="#dcdcdc"/>
<rect x="1465" y="76" width="27" height="7" fill="#f0c060"/><path d="M1468 76 v3 M1471 76 v2 M1474 76 v3 M1477 76 v2 M1480 76 v3 M1483 76 v2 M1486 76 v3 M1489 76 v2" stroke="#8a6a20" stroke-width=".8"/>
<text x="1478" y="109" text-anchor="middle">Measure</text><path d="M1475 115.5 h6 l-3 3z" fill="#f0f0f0"/>
<!-- faint icons under popup -->
<g fill="#e8e8e8" opacity=".9">
 <rect x="1552" y="66" width="22" height="22"/><rect x="1565" y="78" width="16" height="18"/>
 <rect x="1634" y="66" width="14" height="22"/><rect x="1634" y="80" width="28" height="8"/>
</g>
<text x="1568" y="109" text-anchor="middle">Paste</text><text x="1651" y="109" text-anchor="middle">Base</text>
</g>

</svg>

<svg class="a" style="left:0;top:150px" width="1919" height="36" viewBox="0 150 1919 36">
<rect x="10" y="154" width="1900" height="25" fill="#3a3a3a"/>
<rect x="10" y="178" width="1900" height="5" fill="#5b5b5b"/>
<g fill="#565656">
 <path d="M20 179 C28 179 30 174 31 168 C32 161 35 157.5 42 157.5 H147 C152 157.5 154 161 154 166 V179 Z"/>
 <path d="M153 179 C158 179 159 173 160 168 C161 161 164 157.5 170 157.5 H299 C305 157.5 307 161 307 166 V179 Z"/>
</g>
<path d="M306 179 C311 179 312 173 313 168 C314 161 317 157.5 323 157.5 H469 C475 157.5 477 161 477 166 V179 Z" fill="#666"/>
<path d="M484 174 C487 166 489 161 495 161 H503 C508 161 508 165 506 170 C505 173 503 176 498 176 H486 Z" fill="#545454"/>
<path d="M491.5 168.5 h9 M496 164 v9" stroke="#dcdcdc" stroke-width="1.8"/>
<text x="42.5" y="173" font-family="Liberation Sans" font-size="12" fill="#d0d0d0">Start</text>
<text x="165" y="173" font-family="Liberation Sans" font-size="12" fill="#cfcfcf">model1-AbElevations</text>
<text x="318" y="173" font-family="Liberation Sans" font-size="12" fill="#f4f4f4">model26-AirCompressor</text>
<path d="M288 166 l6 6 m0 -6 l-6 6" stroke="#3a3a3a" stroke-width="1.8"/>
<path d="M458 166 l6 6 m0 -6 l-6 6" stroke="#4a4a4a" stroke-width="1.8"/>
</svg>

<div class="t" style="left:14px;top:190px;color:#e6e6e6;font-size:12px">[−][SE Isometric][Conceptual]</div>
<svg class="a" style="left:1840px;top:186px" width="70" height="24" viewBox="1840 186 70 24">
 <rect x="1848.5" y="198.5" width="11" height="4" fill="#ececec" stroke="#0a0a0a" stroke-width="1"/>
 <rect x="1870.5" y="192.5" width="9" height="9" fill="#ececec" stroke="#0a0a0a" stroke-width="1"/>
 <rect x="1868.5" y="194.5" width="9" height="9" fill="#ececec" stroke="#0a0a0a" stroke-width="1"/>
 <rect x="1871" y="197" width="4" height="4" fill="#111"/>
 <path d="M1889.5 194.5 L1897.5 202.5 M1897.5 194.5 L1889.5 202.5" stroke="#0a0a0a" stroke-width="4"/>
 <path d="M1889.5 194.5 L1897.5 202.5 M1897.5 194.5 L1889.5 202.5" stroke="#ececec" stroke-width="2.2"/>
</svg>
<!-- ViewCube -->
<svg class="a" style="left:1750px;top:240px" width="160" height="160" viewBox="1750 240 160 160">
 <defs>
  <linearGradient id="vcl" x1="0" y1="0" x2="0" y2="1"><stop offset="0" stop-color="#d4d4d4"/><stop offset="1" stop-color="#a2a2a6"/></linearGradient>
  <linearGradient id="vcr" x1="0" y1="0" x2="0" y2="1"><stop offset="0" stop-color="#cdcdcd"/><stop offset="1" stop-color="#9c9ca2"/></linearGradient>
  <radialGradient id="vcs" cx=".5" cy=".5" r=".5"><stop offset="0" stop-color="#111418" stop-opacity=".9"/><stop offset="1" stop-color="#212830" stop-opacity="0"/></radialGradient>
 </defs>
 <path fill-rule="evenodd" fill="#464c52" d="M1763.5 319.5 a63.4 38 0 1 0 126.8 0 a63.4 38 0 1 0 -126.8 0 Z M1777.5 319.5 a49.4 26 0 1 0 98.8 0 a49.4 26 0 1 0 -98.8 0 Z"/>
 <ellipse cx="1828" cy="322" rx="36" ry="15" fill="url(#vcs)"/>
 <path d="M1827 252 L1861.5 269 L1827.3 287 L1792.3 269 Z" fill="#c8c8c8" stroke="#7a7a7a" stroke-width=".7"/>
 <path d="M1792.3 269 L1827.3 287 L1827.3 329 L1794 308.5 Z" fill="url(#vcl)" stroke="#7a7a7a" stroke-width=".7"/>
 <path d="M1861.5 269 L1827.3 287 L1827.3 329 L1859.6 308.5 Z" fill="url(#vcr)" stroke="#7a7a7a" stroke-width=".7"/>
 <g font-family="Liberation Sans" font-weight="bold" fill="#56585c" text-anchor="middle">
  <text transform="translate(1827.5 271.5) rotate(24) skewX(-28)" font-size="9">TOP</text>
  <text transform="translate(1810 302) rotate(27)" font-size="9.5" textLength="27" lengthAdjust="spacingAndGlyphs">FRONT</text>
  <text transform="translate(1845 302.5) rotate(-27)" font-size="9.5" textLength="24" lengthAdjust="spacingAndGlyphs">RIGHT</text>
 </g>
 <g font-family="Liberation Sans" font-weight="bold" fill="#adadad" text-anchor="middle">
  <text transform="translate(1786.5 291.5) rotate(-30)" font-size="13">W</text>
  <text transform="translate(1866.5 289.5) rotate(30)" font-size="13">N</text>
  <text transform="translate(1780.5 347) rotate(22)" font-size="16">S</text>
  <text transform="translate(1873 347.5) rotate(-24)" font-size="16">E</text>
 </g>
 <rect x="1803.5" y="376.5" width="47" height="17" rx="5" fill="#8a8c94" stroke="#5c5e66"/>
 <text x="1807.5" y="389" font-family="Liberation Sans" font-size="10.8" fill="#3a3c40">WCS</text>
 <path d="M1838.5 383 h8 l-4 4.5z" fill="none" stroke="#c8c8d0" stroke-width="1"/>
</svg>
<!-- Navigation bar -->
<svg class="a" style="left:1870px;top:390px" width="40" height="220" viewBox="1870 390 40 220">
 <rect x="1874.5" y="395" width="31" height="211" rx="4" fill="#53565a" stroke="#484b4f"/>
 <g fill="none" stroke="#393c40" stroke-width="1.3">
  <circle cx="1900.8" cy="399.8" r="3"/>
  <circle cx="1890.6" cy="423" r="10.5"/>
  <circle cx="1890.6" cy="423" r="5.5"/>
  <path d="M1885 427 l-6 4 M1896 427 l6 4"/>
  <path d="M1882 470 c-2-3-1-5 2-4 l3 3 v-12 c0-2 3-2 3 0 v8 v-10 c0-2 3-2 3 0 v10 v-8 c0-2 3-2 3 0 v8 v-5 c0-2 3-2 3 0 v8 c0 6-3 10-8 10 c-4 0-6-2-9-8z"/>
  <path d="M1879 485 l20 17 M1901 485 l-20 17"/>
  <circle cx="1895" cy="497" r="5" fill="#53565a"/><path d="M1898.5 500.5 l4 4" stroke-width="2.2"/>
  <path d="M1889 522 v18 M1885.5 527 l3.5-5 l3.5 5"/>
  <ellipse cx="1889" cy="534" rx="10" ry="4"/>
  <rect x="1878.5" y="561.5" width="6.5" height="6.5"/><rect x="1886.5" y="561.5" width="6.5" height="6.5"/><rect x="1894.5" y="561.5" width="6.5" height="6.5"/>
  <rect x="1878.5" y="571.5" width="16" height="15"/>
  <circle cx="1900.8" cy="600" r="3"/>
 </g>
 <path d="M1883 574 l8 5 l-8 5z" fill="#393c40"/>
 <path d="M1882 533 l4 -2 v4z" fill="#393c40"/>
 <g fill="#393c40"><path d="M1887.5 444 h6 l-3 3z"/><path d="M1887.5 513 h6 l-3 3z"/><path d="M1887.5 551 h6 l-3 3z"/></g>
 <g stroke="#4a4d51" stroke-width="1"><path d="M1877 452.5 h26 M1877 557 h26"/></g>
 <path d="M1898 599 h5" stroke="#393c40" stroke-width="1"/>
</svg>
<!-- UCS icon -->
<svg class="a" style="left:50px;top:880px" width="70" height="95" viewBox="50 880 70 95">
 <path d="M59.5 888 H70 L59 899.5 H70.5" fill="none" stroke="#5a68ff" stroke-width="1.2"/>
 <rect x="58" y="903" width="4" height="40" fill="#5a6ad8"/>
 <path d="M58.5 903 v40" stroke="#8090ff" stroke-width=".8" stroke-dasharray="1 1"/>
 <path d="M61 942 L95 923.5" stroke="#3aa040" stroke-width="4.2" stroke-linecap="round"/>
 <path d="M93 907 L98.5 913 L104 907 M98.5 913 V919" fill="none" stroke="#3aa040" stroke-width="1.1"/>
 <path d="M59 943 L94.5 963" stroke="#c05a48" stroke-width="4.2" stroke-linecap="round"/>
 <path d="M59 943 L94.5 963" stroke="#e8a080" stroke-width="1" stroke-dasharray="1.5 1.5"/>
 <path d="M92.5 948 L103.5 959 M103.5 948 L92.5 959" stroke="#c03030" stroke-width="1.1"/>
</svg>
<!-- command history -->
<div class="a" style="left:453px;top:910px;width:235px;height:15px;background:#5a5a5a;border-radius:2px"></div>
<div class="a" style="left:453px;top:930px;width:823px;height:15px;background:#5a5a5a;border-radius:2px"></div>
<div class="a" style="left:453px;top:950px;width:60px;height:15px;background:#5a5a5a;border-radius:2px"></div>
<div class="m" style="left:455px;top:910px;color:#d8d8d8">**** System Variable Changed ****</div>
<div class="m" style="left:455px;top:930px;color:#eaeaea">2 of the monitored system variables have changed from the preferred value. Use SYSVARMONITOR command to view changes.</div>
<div class="m" style="left:455px;top:950px;color:#f4f4f4">Command:</div>
<!-- command line -->
<div class="a" style="left:391px;top:969px;width:56px;height:26px;background:linear-gradient(180deg,#5a5a5a,#3e3e3e);border:1px solid #2c2c2c;border-radius:2px 0 0 0"></div>
<div class="a" style="left:447px;top:969px;width:1082px;height:26px;background:#c3c3c5;border-radius:0 2px 0 0"></div>
<svg class="a" style="left:391px;top:969px" width="1140" height="26" viewBox="391 969 1140 26">
 <g fill="#cfcfcf"><rect x="395" y="973" width="2" height="2"/><rect x="398" y="973" width="2" height="2"/><rect x="395" y="976" width="2" height="2"/><rect x="398" y="976" width="2" height="2"/><rect x="395" y="979" width="2" height="2"/><rect x="398" y="979" width="2" height="2"/><rect x="395" y="982" width="2" height="2"/><rect x="398" y="982" width="2" height="2"/><rect x="395" y="985" width="2" height="2"/><rect x="398" y="985" width="2" height="2"/><rect x="395" y="988" width="2" height="2"/><rect x="398" y="988" width="2" height="2"/></g>
 <path d="M407 977.5 l8 8 m0 -8 l-8 8" stroke="#e8e8e8" stroke-width="1.8"/>
 <path d="M427.5 989 L434.5 982" stroke="#e0e0e0" stroke-width="2.2" stroke-linecap="round"/><path d="M440.5 976.5 A3.8 3.8 0 1 0 441 981" fill="none" stroke="#e0e0e0" stroke-width="2.2"/>
 <rect x="452.5" y="976.5" width="15" height="11" fill="#d0d0d0" stroke="#333" stroke-width="1"/><rect x="452.5" y="976.5" width="15" height="2" fill="#444"/>
 <path d="M455 981 l2.5 1.5 l-2.5 1.5 M458 985 h3" stroke="#222" stroke-width=".9" fill="none"/>
 <path d="M470 980 h5 l-2.5 3z" fill="#666"/>
 <path d="M1518 983 h8 l-4 -4z" fill="#222"/>
</svg>
<div class="m" style="left:484px;top:974px;color:#8a8a8a;font-style:italic;font-size:11.65px">Type a command</div>
<!-- Activate windows -->
<div class="t" style="left:1599px;top:939px;color:#8e8e8e;font-size:19.5px;line-height:22px">Activate Windows</div>
<div class="t" style="left:1599px;top:964px;color:#8e8e8e;font-size:14.8px;line-height:16px">Go to Settings to activate Windows.</div>

<svg class="a" style="left:720px;top:340px" width="450" height="510" viewBox="720 340 450 510">
<defs>
 <linearGradient id="gBar" gradientUnits="userSpaceOnUse" x1="900" y1="646" x2="892" y2="660">
  <stop offset="0" stop-color="#c6c6a6"/><stop offset=".5" stop-color="#a4a4ae"/><stop offset="1" stop-color="#7474b2"/>
 </linearGradient>
 <linearGradient id="gRail" gradientUnits="userSpaceOnUse" x1="900" y1="736" x2="891" y2="752">
  <stop offset="0" stop-color="#dcdca0"/><stop offset=".6" stop-color="#c8c8a4"/><stop offset="1" stop-color="#a8a8ae"/>
 </linearGradient>
 <linearGradient id="gTank" gradientUnits="userSpaceOnUse" x1="912" y1="664" x2="888" y2="712">
  <stop offset="0" stop-color="#d8d89c"/><stop offset=".25" stop-color="#e4e49a"/><stop offset=".7" stop-color="#d4d49e"/><stop offset="1" stop-color="#a2a2ae"/>
 </linearGradient>
 <linearGradient id="gLegF" x1="0" y1="0" x2="1" y2="0"><stop offset="0" stop-color="#e2e29c"/><stop offset="1" stop-color="#b0b0a8"/></linearGradient>
 <linearGradient id="gLegR" x1="0" y1="0" x2="1" y2="0"><stop offset="0" stop-color="#7a7ab0"/><stop offset="1" stop-color="#4444bc"/></linearGradient>
 <linearGradient id="gSTop" gradientUnits="userSpaceOnUse" x1="1000" y1="560" x2="1110" y2="600"><stop offset="0" stop-color="#dcdc9c"/><stop offset=".5" stop-color="#cfcf9e"/><stop offset="1" stop-color="#9a9ab2"/></linearGradient>
 <linearGradient id="gSLeft" gradientUnits="userSpaceOnUse" x1="960" y1="600" x2="1025" y2="700"><stop offset="0" stop-color="#d6d69c"/><stop offset=".6" stop-color="#c4c4a2"/><stop offset="1" stop-color="#a8a8ac"/></linearGradient>
 <linearGradient id="gSRight" gradientUnits="userSpaceOnUse" x1="1035" y1="620" x2="1110" y2="690"><stop offset="0" stop-color="#a8a8b0"/><stop offset=".45" stop-color="#7070b4"/><stop offset="1" stop-color="#3c3cb8"/></linearGradient>
 <linearGradient id="gCap" gradientUnits="userSpaceOnUse" x1="1015" y1="750" x2="1100" y2="770"><stop offset="0" stop-color="#d0d0a0"/><stop offset=".5" stop-color="#9090b0"/><stop offset="1" stop-color="#5050b8"/></linearGradient>
 <linearGradient id="gLip" x1="0" y1="0" x2="1" y2="1"><stop offset="0" stop-color="#c8c8a8"/><stop offset="1" stop-color="#7878a8"/></linearGradient>
 <linearGradient id="gCyl" x1="0" y1="0" x2="1" y2="0"><stop offset="0" stop-color="#d8d8a0"/><stop offset=".5" stop-color="#b0b0a8"/><stop offset="1" stop-color="#6a6ab0"/></linearGradient>
</defs>
<g stroke="#ffffff" stroke-width="1.3" stroke-linejoin="round">
 <!-- back right leg -->
 <path d="M1087.4 705 L1105.8 695 L1105.8 774.3 L1087.4 785 Z" fill="#4646b8"/>
 <path d="M1080 781 L1087.4 777 L1087.4 785 Z" fill="#d0d0a0" stroke="none"/>
 <!-- tank body -->
 <path d="M817 620 C810 632 809 655 815 670 L1003 779 L1003 715 Z" fill="url(#gTank)" stroke="none"/>
 <path d="M817 620 C810 632 809 655 815 670 L1000 777" fill="none" stroke="#111" stroke-width="1.2"/>
 <!-- left leg -->
 <path d="M800.5 598 L816.3 589 L816.3 707.5 L800.5 717 Z" fill="url(#gLegR)"/>
 <path d="M817 620 C810 632 809 655 815 670 L818 672 L818 618 Z" fill="url(#gTank)" stroke="none"/>
 <path d="M817 620 C810 632 809 655 815 670" fill="none" stroke="#111" stroke-width="1.2"/>
 <path d="M782.5 588 L800.5 598 L800.5 717 L782.5 707.5 Z" fill="url(#gLegF)"/>
 <path d="M781 612 C777 616 777 628 781 633" fill="none" stroke="#fff" stroke-width="1.2"/>
 <!-- rail -->
 <path d="M800.5 673 L815 665 L1000 772 L985.5 781 Z" fill="#d6d6a0"/>
 <path d="M800.5 678 L985.5 784.5 L985.5 804 L800.5 697.5 Z" fill="url(#gRail)"/>
 <!-- right front leg -->
 <path d="M1002.5 720 L1020 711 L1020 823 L1002.5 833 Z" fill="url(#gLegR)"/>
 <!-- tank right end cap -->
 <path d="M1020 738 C1012 752 1012 775 1020 788.6 C1026 796 1033 800 1040.4 799.5 C1050 799 1058 797 1063.6 795 C1085 780 1100 760 1103 735 L1105 712 L1047 740 Z" fill="url(#gCap)"/>
 <path d="M1020 738 C1012 752 1012 775 1020 788.6" fill="none" stroke="#111" stroke-width="1.2"/>
 <path d="M985 712 L1002.5 722 L1002.5 833 L985 823 Z" fill="url(#gLegF)"/>
 <!-- deck top surface (middle) -->
 <path d="M735.6 551.2 L768.8 531.2 L984 573 L1151 667.5 L1047 730.8 Z" fill="#d6d69f"/>
 <!-- bar top strip + front face -->
 
 <path d="M735.6 551.2 L1047 730.8 L1047 750 L735.6 570.4 Z" fill="url(#gBar)"/>
 <path d="M736.5 553.8 L1046.5 732.6" stroke="#e2e2a2" stroke-width="4"/>
 <path d="M736.5 556.3 L1046.5 735.1" stroke="#fff" stroke-width="1.2"/>
 <path d="M735.6 551.2 L1047 730.8" stroke="#fff" stroke-width="1.3"/>
 <!-- big box -->
 <path d="M770 411.2 L880 347.5 L981.8 406.2 L871.3 468.8 L866 466 L885 454 L862.5 441.3 L842.5 452.5 Z" fill="#d5d59b"/>
 <path d="M770 411.2 L842.5 452.5 L842.5 486 L863.8 498.8 L863.8 465 L871.3 468.8 L871.3 625 L770 566 Z" fill="#c2c29d"/>
 <path d="M871.3 468.8 L981.8 406.2 L981.8 563.8 L871.3 625 Z" fill="#7075a8"/>
 <path d="M842.5 452.5 L862.5 441.3 L842.5 486 Z" fill="#7478aa"/>
 <path d="M862.5 441.3 L885 454 L863.8 465 L863.8 498.8 L842.5 486 Z" fill="#e2e29a"/>
 <!-- small box -->
 <path d="M956.2 592.5 L1048.2 537.5 L1120.5 578.5 L1027.5 631 Z" fill="url(#gSTop)"/>
 <path d="M956.2 592.5 L1027.5 631 L1027.5 714.5 L956.2 677.7 Z" fill="url(#gSLeft)"/>
 <path d="M1027.5 631 L1120.5 578.5 L1120.5 662 L1027.5 714.5 Z" fill="url(#gSRight)"/>
 <!-- right deck top strip / flange -->
 <path d="M1027.5 714.5 L1120.5 662 L1120.5 651 L1151 667.5 L1052 724.5 L1047 730.8 Z" fill="#d6d69f"/>
 <path d="M1047.2 728 L1151 668 L1151 688 L1047.2 747 Z" fill="#121214" stroke="none"/>
 <path d="M1133.3 678.5 L1150.8 668.5 L1150.8 688.3 Z" fill="url(#gLip)"/>
 <!-- valves and pipes -->
 <path d="M941 682 V660 C941 652 945 648 955 644" fill="none" stroke="#fff" stroke-width="6" stroke-linecap="round"/>
 <path d="M941 682 V660 C941 652 945 648 955 644" fill="none" stroke="#c8c8a6" stroke-width="4" stroke-linecap="round"/>
 <path d="M948 706 H962 V738 C962 742 948 742 948 738 Z" fill="url(#gCyl)" stroke-width=".8"/>
 <path d="M977 722 H991 V755 C991 759 977 759 977 755 Z" fill="url(#gCyl)" stroke-width=".8"/>
 <path d="M997 716 C1001 717 1002 721 1002 726 V767" fill="none" stroke="#fff" stroke-width="6"/>
 <path d="M997 716 C1001 717 1002 721 1002 726 V767" fill="none" stroke="#c4c4a8" stroke-width="4"/>
 <path d="M940 683 L951 677.5 L970.5 690.5 L960 696 Z" fill="#777" stroke-width=".8"/>
 <path d="M940 683 L960 696 L960 709.5 L940 697 Z" fill="#666" stroke-width=".8"/>
 <path d="M960 696 L970.5 690.5 L970.5 704 L960 709.5 Z" fill="#5a5a5a" stroke-width=".8"/>
 <path d="M970 700 L981 694.5 L1000.5 707.5 L990 713 Z" fill="#777" stroke-width=".8"/>
 <path d="M970 700 L990 713 L990 726.5 L970 714 Z" fill="#666" stroke-width=".8"/>
 <path d="M990 713 L1000.5 707.5 L1000.5 721 L990 726.5 Z" fill="#5a5a5a" stroke-width=".8"/>
 <path d="M944 702 L954 708 M973 719 L983 725" stroke="#222" stroke-width="2.5"/>
</g>
</svg>

<svg class="a" style="left:0;top:990px" width="1919" height="38" viewBox="0 990 1919 38">
 <defs><linearGradient id="mtab" x1="0" y1="0" x2="0" y2="1"><stop offset="0" stop-color="#969696"/><stop offset="1" stop-color="#7c7c7c"/></linearGradient></defs>
 <path d="M18 995 H84 L77 1008 C75 1012 73 1013 70 1013 H32 C29 1013 27 1012 25.5 1008 Z" fill="url(#mtab)"/>
 <path d="M81 995 H149 L142 1008 C140 1012 138 1013 135 1013 H94 C91 1013 89 1012 87.5 1008 Z" fill="#5c5c5c"/>
 <path d="M152 1010 L158 998 C159 996 160 995.5 162 995.5 H171 L165 1008 C164 1010 163 1011 161 1011 H150 Z" fill="#4c4c4c"/>
 <path d="M155.5 1003.5 h9 M160 999 v9" stroke="#e0e0e0" stroke-width="1.8"/>
 <text x="33.5" y="1009" font-family="Liberation Sans" font-weight="bold" font-size="12" fill="#ffffff">Model</text>
 <text x="91.5" y="1009" font-family="Liberation Sans" font-size="12" fill="#dcdcdc">Layout1</text>
 <g fill="#4b4b4b" stroke="#8a8a8a" stroke-width="1" stroke-dasharray="1.5 1">
  <rect x="1306.5" y="996.5" width="48" height="25"/>
  <rect x="1356.5" y="996.5" width="64" height="25"/>
  <rect x="1422.5" y="996.5" width="103" height="25"/>
  <rect x="1526.5" y="996.5" width="63" height="25"/>
  <rect x="1590.5" y="996.5" width="121" height="25"/>
  <rect x="1713.5" y="996.5" width="39" height="25"/>
  <rect x="1753.5" y="996.5" width="25" height="25"/>
  <rect x="1780.5" y="996.5" width="26" height="25"/>
  <rect x="1808.5" y="996.5" width="49" height="25"/>
  <rect x="1859.5" y="996.5" width="49" height="25"/>
 </g>
 <text x="1310.5" y="1013" font-family="Liberation Sans" font-size="11.4" fill="#f2f2f2">MODEL</text>
 <g stroke="#f0f0f0" stroke-width="1.3" fill="none">
  <path d="M1364 1001 v15 M1368.5 1001 v15 M1373 1001 v15 M1361 1004 h15 M1361 1008.5 h15 M1361 1013 h15"/>
 </g>
 <g fill="#f0f0f0">
  <rect x="1386" y="1001.5" width="2" height="2"/><rect x="1391.5" y="1001.5" width="2" height="2"/><rect x="1397" y="1001.5" width="2" height="2"/>
  <rect x="1386" y="1007" width="2" height="2"/><rect x="1391.5" y="1007" width="2" height="2"/><rect x="1397" y="1007" width="2" height="2"/>
  <rect x="1386" y="1012.5" width="2" height="2"/><rect x="1391.5" y="1012.5" width="2" height="2"/><rect x="1397" y="1012.5" width="2" height="2"/>
  <path d="M1408.5 1007 h7 l-3.5 3.5z"/><path d="M1474.5 1007 h7 l-3.5 3.5z"/><path d="M1514 1007 h7 l-3.5 3.5z"/><path d="M1577.5 1007 h7 l-3.5 3.5z"/>
  <path d="M1700 1007 h7 l-3.5 3.5z"/><path d="M1742 1007 h7 l-3.5 3.5z"/>
 </g>
 <g fill="#5b8ccc"><rect x="1424" y="998" width="22" height="22"/><rect x="1527.5" y="998" width="22" height="22"/><rect x="1551" y="998" width="22" height="22"/><rect x="1593" y="998" width="22" height="22"/></g>
 <g stroke="#f4f4f4" stroke-width="1.3" fill="none">
  <path d="M1428 1000 v16 h15 M1428 1011 h4.5 v5"/>
  <circle cx="1457.5" cy="1009.5" r="6"/><path d="M1457.5 1009.5 l7-7 M1457.5 1009.5 h9"/>
  <path d="M1531 1015 L1544 1003 M1530 1016 h16"/>
  <rect x="1555.5" y="1003.5" width="15" height="13"/><rect x="1553.5" y="1000.5" width="4" height="4"/>
 </g>
 <path d="M1491 1001 L1505 1016" stroke="#c86a40" stroke-width="1.2"/><path d="M1498 1000 v17" stroke="#c8c890" stroke-width="1.2"/><circle cx="1498" cy="1008.5" r="1.6" fill="#4a4a4a" stroke="#eee" stroke-width="1"/>
 <circle cx="1538" cy="1009" r="1.6" fill="#f4f4f4"/>
 <g fill="#f4f4f4">
  <path d="M1604 998.5 L1611 1016 L1604 1012 L1597 1016 Z"/>
  <path d="M1628 999 L1635 1016 L1628 1012 L1621 1016 Z" fill="#dcdcdc"/>
  <path d="M1652 1000 L1659 1016 L1652 1012 L1645 1016 Z" fill="#dcdcdc"/>
 </g>
 <circle cx="1612" cy="1002" r="2.4" fill="none" stroke="#f4f4f4" stroke-width="1"/>
 <path d="M1636 999 l-3 4 h3 l-2 4" stroke="#dcdcdc" fill="none" stroke-width="1"/>
 <text x="1668.5" y="1013" font-family="Liberation Sans" font-size="12" fill="#f2f2f2" letter-spacing="-0.3">1:100</text>
 <circle cx="1725.5" cy="1008.5" r="5.5" fill="none" stroke="#e4e4e4" stroke-width="3.5" stroke-dasharray="2.2 1.3"/><circle cx="1725.5" cy="1008.5" r="4.2" fill="#e4e4e4"/><circle cx="1725.5" cy="1008.5" r="2" fill="#4b4b4b"/>
 <path d="M1758 1008.5 h16 M1766 1000.5 v16" stroke="#f0f0f0" stroke-width="1.6"/>
 <g stroke="#e8e8e8" stroke-width="1" fill="none"><rect x="1785.5" y="1000.5" width="6" height="6"/><circle cx="1797" cy="1005" r="3.3"/><path d="M1791 1010 l3.5 6 h-7z"/></g>
 <path d="M1813 1000 h9 l3 3 v7 h-12z" fill="#6cb8e8"/><rect x="1813" y="1010" width="8" height="4" fill="#f0c050"/><path d="M1820 1012 l3 3 l5-6" stroke="#40a040" stroke-width="2" fill="none"/>
 <rect x="1836" y="1001" width="14" height="11" fill="#ececec"/><path d="M1837 1011 l4-8 l4 6 l4-4" stroke="#666" fill="none" stroke-width="1"/><path d="M1846 1016 l4-7 l4 7z" fill="#c8583a"/>
 <rect x="1864.5" y="1002.5" width="15" height="11" fill="none" stroke="#e8e8e8" stroke-width="1.2"/><path d="M1867 1011 l3-3 M1877 1005 l-3 3" stroke="#e8e8e8" stroke-width="1.2"/>
 <path d="M1888 1002 h15 M1888 1008 h15 M1888 1014 h15" stroke="#ececec" stroke-width="2"/>
</svg>

<svg class="a" style="left:1485px;top:28px" width="270" height="110" viewBox="1485 28 270 110">
 <defs><linearGradient id="pop" x1="0" y1="0" x2="0" y2="1"><stop offset="0" stop-color="#e2e2e2" stop-opacity=".93"/><stop offset="1" stop-color="#dadada" stop-opacity=".9"/></linearGradient>
 <radialGradient id="bulb" cx=".4" cy=".35" r=".6"><stop offset="0" stop-color="#f4f0c0"/><stop offset="1" stop-color="#c8c070"/></radialGradient></defs>
 <path d="M1495 43 H1709 L1720.8 32 L1732.4 43 H1742 Q1746 43 1746 47 V128.4 Q1746 132.4 1742 132.4 H1495 Q1491 132.4 1491 128.4 V47 Q1491 43 1495 43 Z" fill="url(#pop)"/>
 <circle cx="1733.4" cy="53.5" r="5.6" fill="#7c7c7c"/>
 <path d="M1730.8 50.9 l5.2 5.2 m0 -5.2 l-5.2 5.2" stroke="#f4f4f4" stroke-width="1.2"/>
 <path d="M1509 54 C1503 54 1501.5 59 1502 62 C1502.5 66 1506 68 1506 71 H1512 C1512 68 1515.5 66 1516 62 C1516.5 59 1515 54 1509 54 Z" fill="url(#bulb)" stroke="#5a5a40" stroke-width="1"/>
 <rect x="1506" y="71" width="6" height="3.5" fill="#e8e8e8" stroke="#444" stroke-width=".8"/><path d="M1507 75 h4 l-1 1.5 h-2z" fill="#333"/>
 <text x="1527.5" y="65" font-family="Liberation Sans" font-weight="bold" font-size="11.5" fill="#141414">3D display performance</text>
 <text x="1527.5" y="84.5" font-family="Liberation Sans" font-size="12" fill="#1a1a1a">You can improve performance for</text>
 <text x="1527.5" y="99.5" font-family="Liberation Sans" font-size="11.8" fill="#1a1a1a">3D pan, zoom, and orbit operations.</text>
 <text x="1527.5" y="119.5" font-family="Liberation Sans" font-size="12" fill="#0a0ad8">Don't show me this again</text>
 <rect x="1527.5" y="121" width="133.5" height="1" fill="#0a0ad8"/>
 <path d="M1722.8 115.3 h12.4 l-6.2 7.5z" fill="#555"/>
</svg>

</body></html>
